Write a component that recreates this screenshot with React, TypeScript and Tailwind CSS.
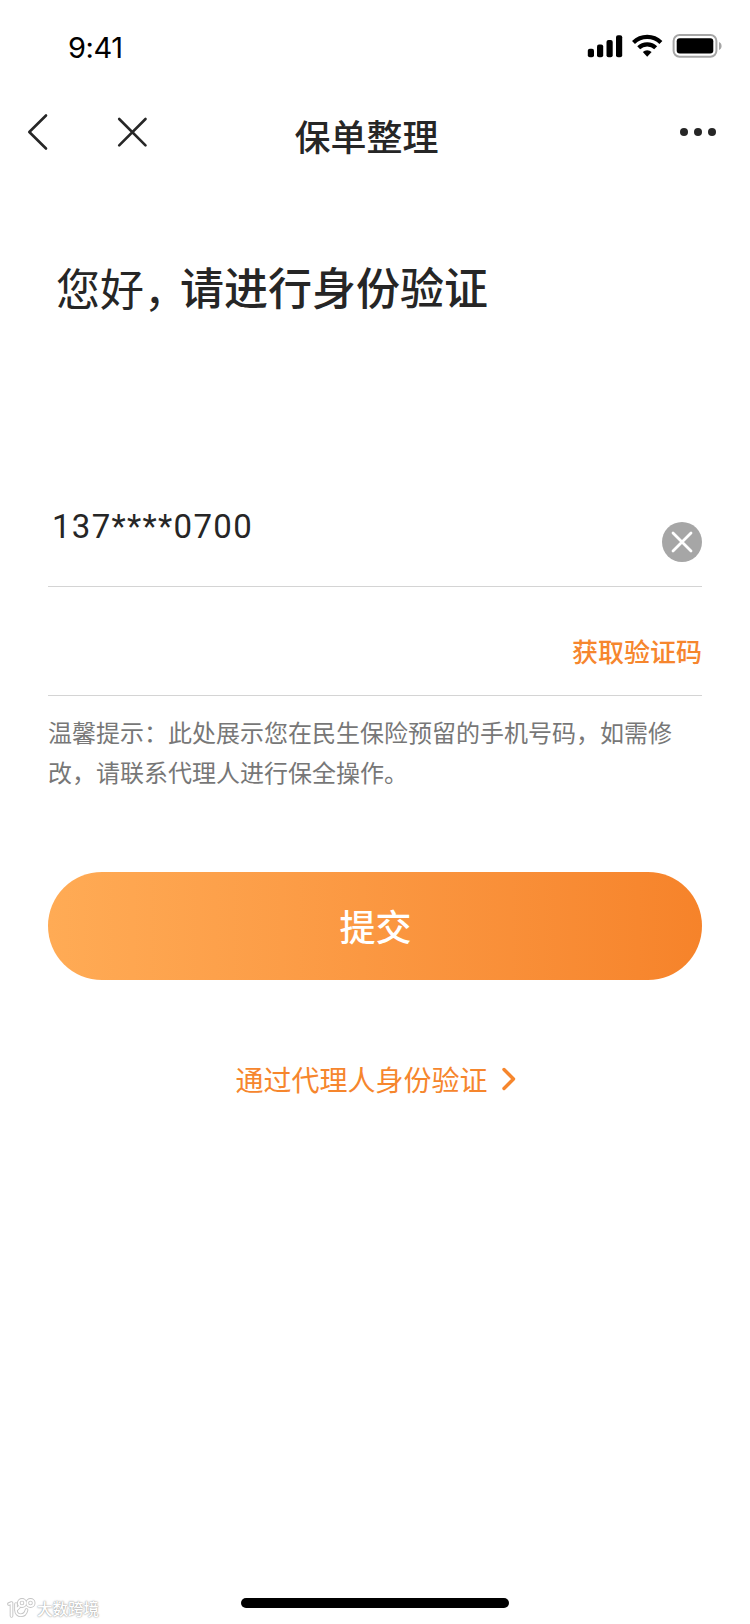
import type { ReactNode } from 'react';

const StatusBar = () => (
    <div className="flex h-[88px] shrink-0 justify-between pl-[68px] pr-[27px] pt-[29px]">
        <span className="mt-px font-['Inter',sans-serif] text-[29px] leading-[36px] tracking-[-0.4px] text-black">9:41</span>
        <svg className="mt-[3px] h-7 w-[138px]" viewBox="0 0 138 28" fill="none">
            {/* Signal */}
            <g fill="#000">
                <rect x="2.8" y="16.8" width="6.2" height="8.4" rx="2" />
                <rect x="12" y="12.5" width="6.2" height="12.7" rx="2" />
                <rect x="21.5" y="8" width="6.2" height="17.2" rx="2" />
                <rect x="31" y="3.3" width="6.2" height="21.9" rx="2" />
            </g>
            {/* Wifi */}
            <g stroke="#000" strokeWidth="4.2">
                <path d="M48.5 10.4a19.6 19.6 0 0 1 27.4 0" />
                <path d="M53.7 15.8a12.2 12.2 0 0 1 17 0" />
            </g>
            <path d="M57.8 20a6.6 6.6 0 0 1 8.8 0l-4.4 4.8Z" fill="#000" />
            {/* Battery */}
            <rect x="88.6" y="3" width="42.8" height="21.8" rx="6" stroke="#a6a6a6" strokeWidth="2" />
            <rect x="91.7" y="6.3" width="36.6" height="15.2" rx="3" fill="#000" />
            <path d="M134 10v8c1.7-.7 2.6-2.2 2.6-4s-.9-3.3-2.6-4Z" fill="#a6a6a6" />
        </svg>
    </div>
);

const NavBar = () => (
    <header className="grid h-[88px] shrink-0 grid-cols-[1fr_auto_1fr] items-center pl-[27px] pr-[34px]">
        <div className="flex gap-[67px]">
            <svg className="h-[38px] w-[22px]" viewBox="0 0 22 38" fill="none" stroke="#262626" strokeWidth="2.6" strokeLinecap="round" strokeLinejoin="round">
                <path d="M19 2.5 2.3 19 19 35.5" />
            </svg>
            <svg className="h-[38px] w-8" viewBox="0 0 32 38" fill="none" stroke="#262626" strokeWidth="2.6" strokeLinecap="round">
                <path d="M3.2 6 29.500 32.300M29.500 6 3.200 32.300" />
            </svg>
        </div>
        <h1 className="-ml-[10px] mt-[6px] text-4xl leading-[50px] font-medium text-[#262626]">保单整理</h1>
        <svg className="h-2 w-9 justify-self-end" viewBox="0 0 36 8" fill="#262626">
            <circle cx="4" cy="4" r="4" />
            <circle cx="18" cy="4" r="4" />
            <circle cx="32" cy="4" r="4" />
        </svg>
    </header>
);

const Field = ({ children, className }: { children: ReactNode; className: string }) => (
    <div className={`flex border-b border-[#d4d4d4] ${className}`}>{children}</div>
);

export default function App() {
    return (
        <div className="flex h-[1624px] w-[750px] flex-col overflow-hidden bg-white font-['Noto_Sans_CJK_SC',sans-serif]">
            <StatusBar />
            <NavBar />

            <main className="flex flex-col px-12">
                <h2 className="mt-[78px] flex h-[64px] pl-2 text-[44px] leading-[64px] text-[#262626]">
                    <span className="pt-px font-normal">您好</span>
                    <span className="mt-[2px] w-9 font-normal [font-feature-settings:'halt']">，</span>
                    <span className="font-medium">请进行身份验证</span>
                </h2>

                <Field className="mt-[189px] h-[80px] justify-between">
                    <span className="mt-px pl-1 font-['Roboto',sans-serif] text-[33px] leading-[38px] tracking-[1.3px] text-[#262626]">137****0700</span>
                    <svg className="mt-[15px] size-10" viewBox="0 0 40 40">
                        <circle cx="20" cy="20" r="20" fill="#a6a6a6" />
                        <path d="M11 11l18 18M29 11 11 29" stroke="#fff" strokeWidth="2.8" strokeLinecap="round" />
                    </svg>
                </Field>
                <Field className="h-[109px] items-center justify-end">
                    <button className="mt-[20px] text-[26px] leading-9 font-medium text-[#f6862d]">获取验证码</button>
                </Field>

                <p className="mt-[16px] text-2xl leading-10 text-[#777777]">
                    温馨提示：此处展示您在民生保险预留的手机号码，如需修改，请联系代理人进行保全操作。
                </p>

                <button className="mt-[80px] h-[108px] rounded-full bg-linear-to-r from-[#ffab55] to-[#f6832a] pb-[3px] pl-px text-4xl font-medium text-white">
                    提交
                </button>

                <a className="mt-[79px] flex items-center justify-center gap-[14px] pl-px text-[28px] leading-10 text-[#f6862d]">
                    通过代理人身份验证
                    <svg className="h-6 w-[14px]" viewBox="0 0 14 24" fill="none" stroke="#f6862d" strokeWidth="3.4" strokeLinecap="round" strokeLinejoin="round">
                        <path d="M2 2.5 11.5 12 2 21.5" />
                    </svg>
                </a>
            </main>

            <footer className="mt-auto grid h-[30px] grid-cols-[241px_268px_1fr]">
                <div className="flex items-start gap-px pl-[7px]">
                    <svg className="mt-1 h-[22px] w-[29px]" viewBox="0 0 29 22" fill="none" strokeLinecap="round" strokeLinejoin="round">
                        <g stroke="#c4c4c4" strokeWidth="3.6">
                            <path d="M2 6l2.5-1v13M9 6v6c0 7 9 7 10.500 0M9 12l3-3" />
                            <circle cx="15" cy="5" r="3.2" />
                            <circle cx="23.5" cy="5" r="3.2" />
                        </g>
                        <g stroke="#fff" strokeWidth="1.8">
                            <path d="M2 6l2.5-1v13M9 6v6c0 7 9 7 10.500 0M9 12l3-3" />
                            <circle cx="15" cy="5" r="3.2" />
                            <circle cx="23.5" cy="5" r="3.2" />
                        </g>
                    </svg>
                    <span className="text-[15.5px] leading-[29px] font-medium text-white [text-shadow:0_0_2px_#999,0_0_1px_#aaa]">大数跨境</span>
                </div>
                <div className="mt-1 h-[10px] rounded-full bg-black" />
            </footer>
        </div>
    );
}
